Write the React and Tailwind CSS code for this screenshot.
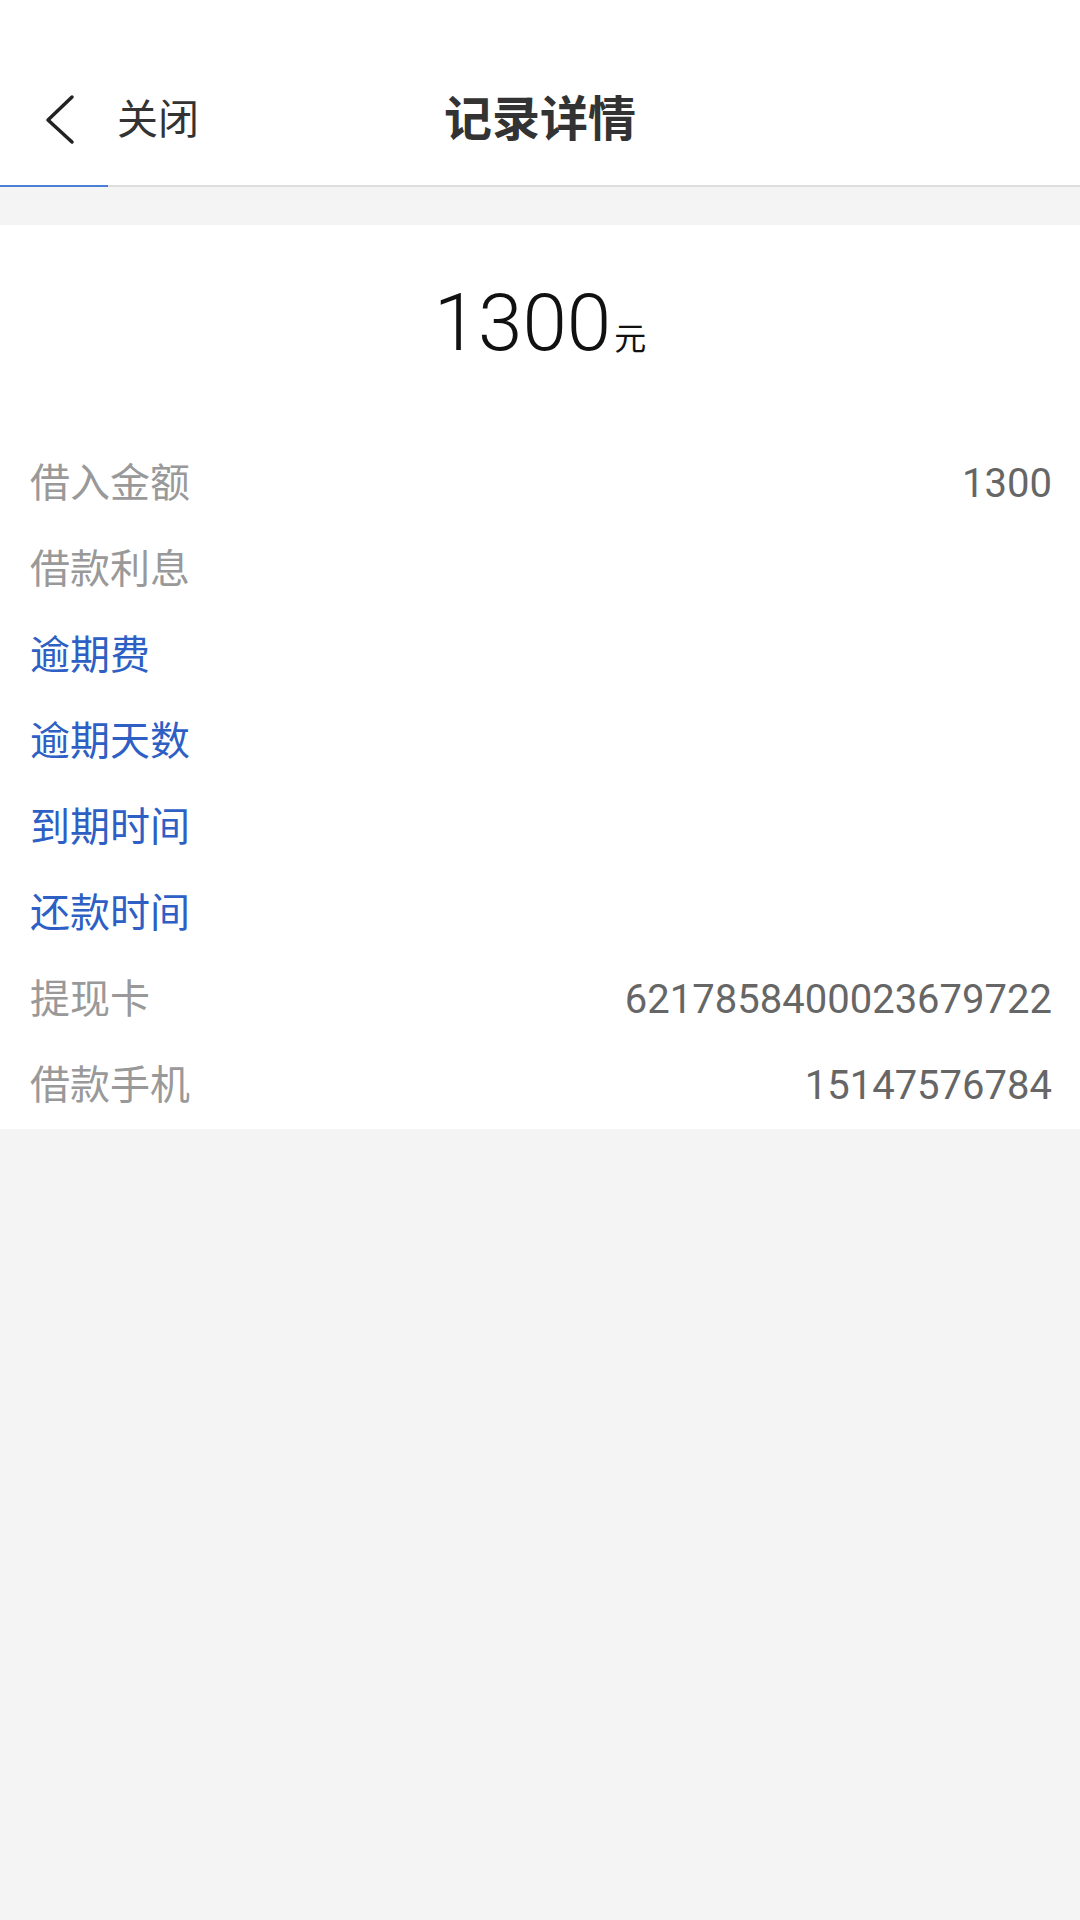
export default function App() {
  const rows = [
    { label: "借入金额", value: "1300", blue: false },
    { label: "借款利息", value: "", blue: false },
    { label: "逾期费", value: "", blue: true },
    { label: "逾期天数", value: "", blue: true },
    { label: "到期时间", value: "", blue: true },
    { label: "还款时间", value: "", blue: true },
    { label: "提现卡", value: "6217858400023679722", blue: false },
    { label: "借款手机", value: "15147576784", blue: false },
  ];
  return (
    <div
      className="min-h-[1920px] w-[1080px] bg-[#f4f4f4]"
      style={{ fontFamily: 'Roboto, "Noto Sans CJK SC", sans-serif' }}
    >
      <div className="bg-white h-[185px] flex items-end">
        <div className="h-[130px] w-full grid grid-cols-[1fr_auto_1fr] items-center">
          <div className="flex items-center">
            <svg width="40" height="60" viewBox="0 0 40 60" className="ml-[39px]">
              <polyline
                points="33,7 9,30 33,52"
                fill="none"
                stroke="#222"
                strokeWidth="3.5"
                strokeLinecap="round"
                strokeLinejoin="round"
              />
            </svg>
            <span className="ml-[38px] text-[41px] leading-none text-[#333]">关闭</span>
          </div>
          <div className="text-[48px] leading-none font-bold text-[#333]">记录详情</div>
          <div />
        </div>
      </div>
      <div className="relative h-[2px] bg-[#dedede]">
        <div className="absolute left-0 top-0 h-[2px] w-[108px] bg-[#4a7fd6]" />
      </div>
      <div className="h-[38px]" />
      <div className="bg-white">
        <div className="h-[216px] pt-[58px] flex justify-center items-baseline">
          <span className="text-[80px] leading-none font-light text-[#111]">1300</span>
          <span className="ml-[3px] text-[32px] leading-none text-[#111]">元</span>
        </div>
        {rows.map((r) => (
          <div key={r.label} className="h-[86px] flex items-center justify-between pl-[30px] pr-[28px]">
            <span className={`text-[40px] leading-none ${r.blue ? "text-[#2d5fc4]" : "text-[#999]"}`}>
              {r.label}
            </span>
            <span className="text-[40px] leading-none text-[#666]">{r.value}</span>
          </div>
        ))}
      </div>
    </div>
  );
}
